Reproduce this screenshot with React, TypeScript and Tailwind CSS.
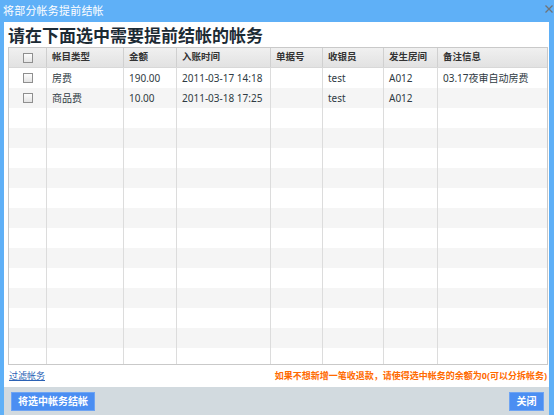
import React from 'react';

const FONT = { fontFamily: '"Noto Sans", "Noto Sans CJK SC", sans-serif' };

type Row = {
  type: string;
  amount: string;
  time: string;
  bill: string;
  cashier: string;
  room: string;
  note: string;
};

const ROWS: Row[] = [
  { type: '房费', amount: '190.00', time: '2011-03-17 14:18', bill: '', cashier: 'test', room: 'A012', note: '03.17夜审自动房费' },
  { type: '商品费', amount: '10.00', time: '2011-03-18 17:25', bill: '', cashier: 'test', room: 'A012', note: '' },
];

const HEADERS = ['帐目类型', '金额', '入账时间', '单据号', '收银员', '发生房间', '备注信息'];
const WIDTHS = ['w-[77px]', 'w-[53px]', 'w-[94px]', 'w-[52px]', 'w-[61px]', 'w-[54px]', 'flex-1'];

function Checkbox() {
  return (
    <span className="block h-[10px] w-[10px] border border-[#8f8f8f] bg-gradient-to-b from-[#fdfdfd] to-[#e4e4e4]" />
  );
}

function App() {
  const filler = Array.from({ length: 15 - ROWS.length });

  return (
    <div className="flex h-[415px] w-[554px] flex-col overflow-hidden bg-[#5fb0f7]" style={FONT}>
      <div className="relative flex h-[22px] shrink-0 items-center pl-[3px] text-[11px] tracking-[0.2px] text-white">
        将部分帐务提前结帐
        <svg className="absolute right-[1px] top-[5px]" width="8" height="8" viewBox="0 0 8 8">
          <path d="M0.5 0.5 L7.5 7.5 M7.5 0.5 L0.5 7.5" stroke="#6f7478" strokeWidth="1.3" />
        </svg>
      </div>

      <div className="ml-[4px] mr-[5px] flex flex-1 flex-col bg-white">
        <div className="flex h-[25px] shrink-0 items-center pl-[4px] pt-[1px] text-[17px] font-bold leading-none text-[#1c2a34]">
          请在下面选中需要提前结帐的帐务
        </div>

        <div className="ml-[4px] mr-[1px] shrink-0 border border-[#c9c9c9]">
          <div className="flex h-[20px] border-b border-[#d8d8d8] bg-gradient-to-b from-[#f0f0f0] to-[#e2e2e2] text-[9.5px] font-bold text-[#333]">
            <div className="flex w-[38px] items-center justify-center border-r border-[#cfcfcf]">
              <Checkbox />
            </div>
            {HEADERS.map((h, i) => (
              <div
                key={h}
                className={`${WIDTHS[i]} flex items-center pl-[5px] ${i < HEADERS.length - 1 ? 'border-r border-[#d0d0d0]' : ''}`}
              >
                {h}
              </div>
            ))}
          </div>

          <div className="h-[296px] overflow-hidden text-[10px] text-[#2f3b43]">
            {ROWS.map((r, idx) => {
              const cells = [r.type, r.amount, r.time, r.bill, r.cashier, r.room, r.note];
              return (
                <div key={idx} className={`flex h-[20px] ${idx % 2 ? 'bg-[#f5f5f5]' : 'bg-white'}`}>
                  <div className="flex w-[38px] items-center justify-center border-r border-[#dcdcdc]">
                    <Checkbox />
                  </div>
                  {cells.map((c, i) => (
                    <div
                      key={i}
                      className={`${WIDTHS[i]} flex items-center whitespace-nowrap pl-[5px] ${i < cells.length - 1 ? 'border-r border-[#dcdcdc]' : ''}`}
                    >
                      {c}
                    </div>
                  ))}
                </div>
              );
            })}
            {filler.map((_, k) => {
              const idx = k + ROWS.length;
              return (
                <div key={idx} className={`flex h-[20px] ${idx % 2 ? 'bg-[#f5f5f5]' : 'bg-white'}`}>
                  <div className="w-[38px] border-r border-[#dcdcdc]" />
                  {WIDTHS.map((w, i) => (
                    <div key={i} className={`${w} ${i < WIDTHS.length - 1 ? 'border-r border-[#dcdcdc]' : ''}`} />
                  ))}
                </div>
              );
            })}
          </div>
        </div>

        <div className="flex flex-1 items-center justify-between pl-[5px] pr-[2px]">
          <a href="#" className="text-[9px] text-[#2b62b5] underline">
            过滤帐务
          </a>
          <span className="text-[9px] font-bold text-[#ff6a00]">
            如果不想新增一笔收退款，请使得选中帐务的余额为0(可以分拆帐务)
          </span>
        </div>
      </div>

      <div className="ml-[4px] mr-[5px] flex h-[28px] shrink-0 items-center justify-between bg-[#d2dadf] pl-[7px] pr-[5px]">
        <button className="h-[19px] w-[84px] border border-[#6ea4f3] bg-[#4b8ef2] text-[10px] font-bold text-white">
          将选中帐务结帐
        </button>
        <button className="h-[19px] w-[35px] border border-[#6ea4f3] bg-[#4b8ef2] text-[10px] font-bold text-white">
          关闭
        </button>
      </div>
    </div>
  );
}

export default App;
